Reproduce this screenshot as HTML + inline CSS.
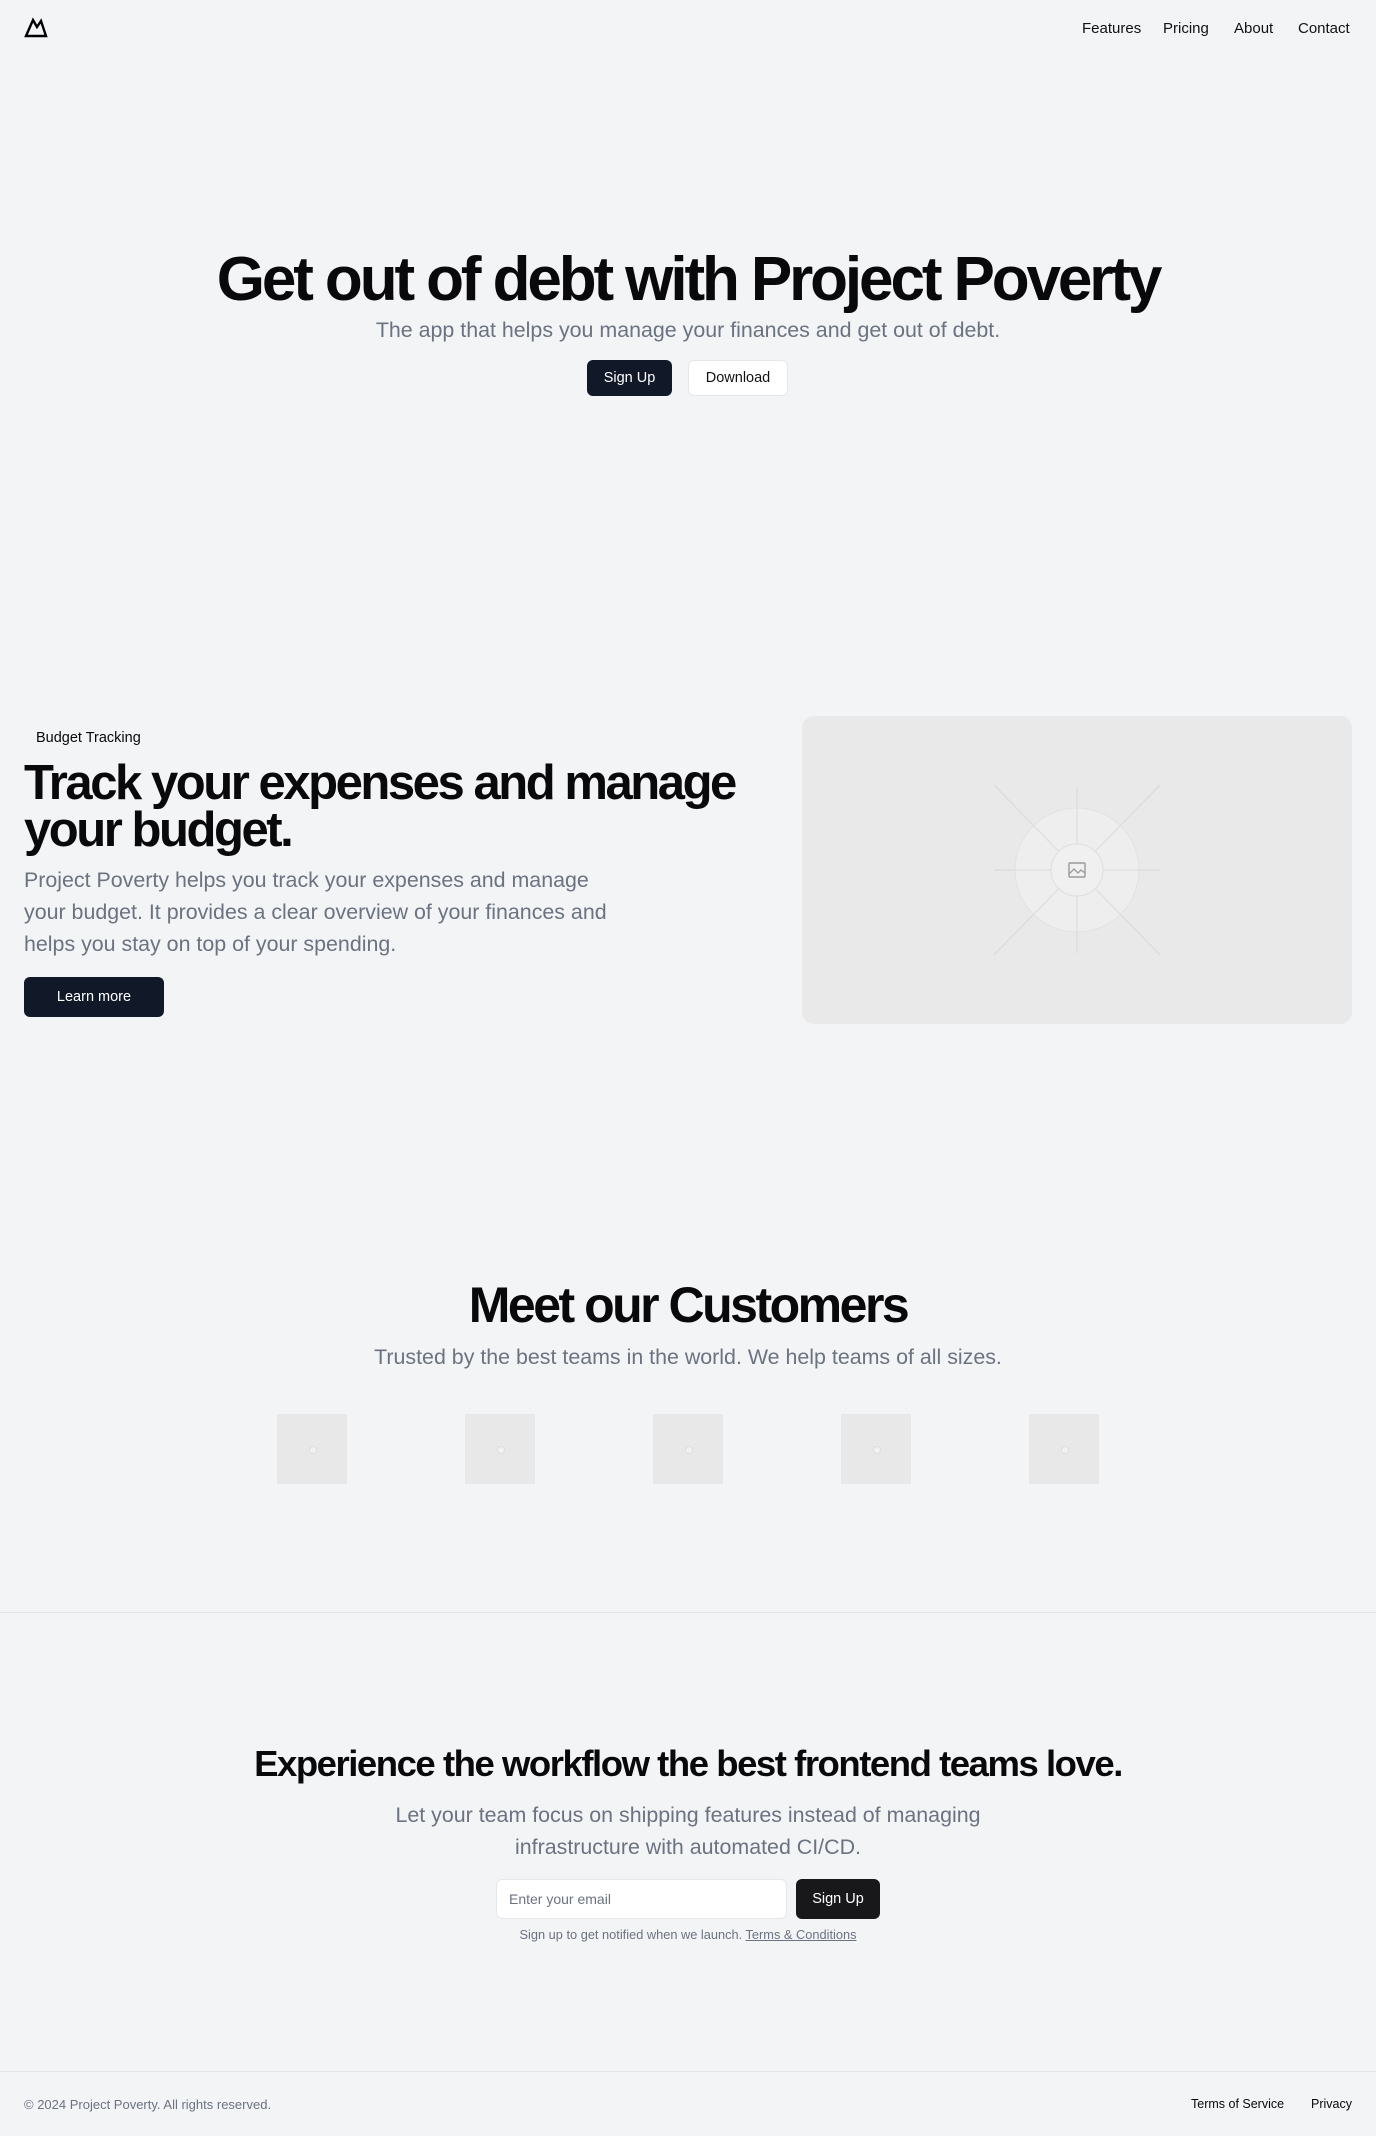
<!DOCTYPE html>
<html><head><meta charset="utf-8"><style>
*{margin:0;padding:0;box-sizing:border-box}
body{width:1376px;height:2136px;background:#f3f4f6;font-family:"Liberation Sans",sans-serif;color:#09090b;position:relative;overflow:hidden}
.a{position:absolute}
.nav a{position:absolute;top:20px;font-size:15px;color:#111;text-decoration:none}
h1,h2{font-weight:700;letter-spacing:-0.05em;white-space:nowrap}
.c{left:0;width:1376px;text-align:center}
.gray{color:#6b7280}
.btn{position:absolute;border-radius:6px;font-size:14.5px;display:flex;align-items:center;justify-content:center}
.dark{background:#111827;color:#fff}
.logo{position:absolute;top:1414px;width:70px;height:70px;background:#e8e8e8}
.logo::after{content:"";position:absolute;left:32px;top:32px;width:6px;height:6px;border-radius:50%;background:#f2f2f2;border:1px solid #ddd}
</style></head><body>
<svg class="a" style="left:0;top:0" width="60" height="50"><path d="M26 36 L33 20 L37 27 L41 21 L46 36 Z" fill="none" stroke="#000" stroke-width="2.4" stroke-linejoin="miter"/></svg>
<div class="nav"><a style="left:1082px">Features</a><a style="left:1163px">Pricing</a><a style="left:1234px">About</a><a style="left:1298px">Contact</a></div>

<h1 class="a c" style="top:245px;font-size:62px;line-height:70px">Get out of debt with Project Poverty</h1>
<div class="a c gray" style="top:318px;font-size:21.4px">The app that helps you manage your finances and get out of debt.</div>
<div class="btn dark" style="left:587px;top:360px;width:85px;height:36px">Sign Up</div>
<div class="btn" style="left:688px;top:360px;width:100px;height:36px;background:#fff;border:1px solid #e5e7eb;color:#111">Download</div>

<div class="a" style="left:36px;top:730px;font-size:14.5px">Budget Tracking</div>
<h2 class="a" style="left:24px;top:760px;font-size:49px;line-height:47px">Track your expenses and manage<br>your budget.</h2>
<div class="a gray" style="left:24px;top:864px;width:610px;font-size:21.4px;line-height:32px">Project Poverty helps you track your expenses and manage<br>your budget. It provides a clear overview of your finances and<br>helps you stay on top of your spending.</div>
<div class="btn dark" style="left:24px;top:977px;width:140px;height:40px">Learn more</div>
<div class="a" style="left:802px;top:716px;width:550px;height:308px;background:#e9e9e9;border-radius:12px"></div>
<svg class="a" style="left:977px;top:770px" width="200" height="200" viewBox="-100 -100 200 200">
<g stroke="#dcdcdc" stroke-width="1.3"><line x1="-83" y1="0" x2="83" y2="0"/><line x1="0" y1="-83" x2="0" y2="83"/><line x1="-83" y1="-85" x2="83" y2="85"/><line x1="83" y1="-85" x2="-83" y2="85"/></g>
<circle r="62" fill="#efefef" fill-opacity=".7" stroke="#e2e2e2"/>
<g stroke="#e0e0e0" stroke-width="1.3"><line x1="-62" y1="0" x2="62" y2="0"/><line x1="0" y1="-62" x2="0" y2="62"/><line x1="-44" y1="-45" x2="44" y2="45"/><line x1="44" y1="-45" x2="-44" y2="45"/></g>
<circle r="26" fill="#f0f0f0" stroke="#dedede"/>
<rect x="-8" y="-7" width="16" height="14" fill="none" stroke="#999" stroke-width="1.4" rx="1"/>
<path d="M-8 4 L-3 -1 L1 3 L4 0 L8 3" fill="none" stroke="#999" stroke-width="1.3"/>
</svg>

<h2 class="a c" style="top:1277px;font-size:50px;line-height:56px">Meet our Customers</h2>
<div class="a c gray" style="top:1345px;font-size:21.4px">Trusted by the best teams in the world. We help teams of all sizes.</div>
<div class="logo" style="left:277px"></div><div class="logo" style="left:465px"></div><div class="logo" style="left:653px"></div><div class="logo" style="left:841px"></div><div class="logo" style="left:1029px"></div>

<div class="a" style="left:0;top:1612px;width:1376px;height:1px;background:#e3e5e8"></div>
<h2 class="a c" style="top:1743px;font-size:36.5px;line-height:42px;letter-spacing:-0.04em">Experience the workflow the best frontend teams love.</h2>
<div class="a c gray" style="top:1799px;font-size:21.4px;line-height:32px">Let your team focus on shipping features instead of managing<br>infrastructure with automated CI/CD.</div>
<div class="a" style="left:496px;top:1879px;width:291px;height:40px;background:#fff;border:1px solid #e5e7eb;border-radius:6px;font-size:14px;color:#6b7280;padding:11px 12px">Enter your email</div>
<div class="btn" style="left:796px;top:1879px;width:84px;height:40px;background:#18181b;color:#fff">Sign Up</div>
<div class="a c gray" style="top:1927px;font-size:12.8px">Sign up to get notified when we launch. <u>Terms &amp; Conditions</u></div>

<div class="a" style="left:0;top:2071px;width:1376px;height:1px;background:#e3e5e8"></div>
<div class="a gray" style="left:24px;top:2097px;font-size:13px">© 2024 Project Poverty. All rights reserved.</div>
<div class="a" style="left:1191px;top:2097px;font-size:12.5px">Terms of Service</div>
<div class="a" style="left:1311px;top:2097px;font-size:12.5px">Privacy</div>
</body></html>
